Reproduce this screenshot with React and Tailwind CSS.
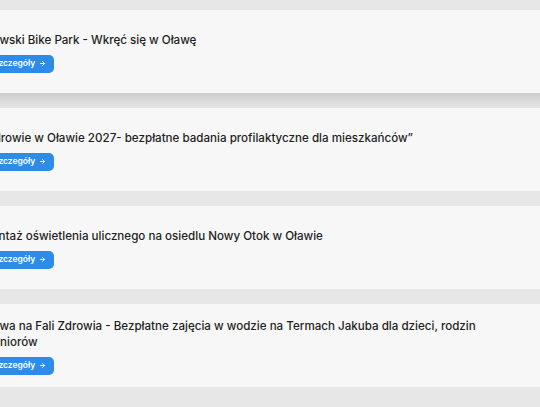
import { ArrowRight } from "lucide-react"

const items = [
  { title: "Oławski Bike Park - Wkręć się w Oławę", raised: true },
  { title: "„Zdrowie w Oławie 2027- bezpłatne badania profilaktyczne dla mieszkańców”" },
  { title: "Montaż oświetlenia ulicznego na osiedlu Nowy Otok w Oławie" },
  { title: "Oława na Fali Zdrowia - Bezpłatne zajęcia w wodzie na Termach Jakuba dla dzieci, rodzin i seniorów" },
]

function NewsCard({ title, raised }) {
  return (
    <div
      className={
        "h-[83px] w-[660px] -ml-[80px] bg-[#f7f7f7] flex items-center pl-[38px] " +
        (raised ? "shadow-[0_12px_10px_-4px_rgba(0,0,0,0.11)]" : "")
      }
    >
      <div className="flex flex-col items-start gap-[7px] pt-[1px]">
        <h3 className="ml-[23px] text-[11.6px] leading-[16px] font-medium text-[#1e1e1e] max-w-[500px]">
          {title}
        </h3>
        <button className="-ml-[5px] h-[18px] rounded-[5px] bg-[#2f8ce6] text-white text-[8.5px] font-semibold pl-[8px] pr-[8px] flex items-center gap-[4px]">
          Zobacz szczegóły
          <ArrowRight size={7} strokeWidth={3} />
        </button>
      </div>
    </div>
  )
}

export default function App() {
  return (
    <div
      className="h-[407px] w-[540px] overflow-hidden bg-[#e7e7e7] pt-[10px] flex flex-col gap-[15px]"
      style={{ fontFamily: "Inter, 'Noto Sans', sans-serif" }}
    >
      {items.map((it) => (
        <NewsCard key={it.title} {...it} />
      ))}
    </div>
  )
}
